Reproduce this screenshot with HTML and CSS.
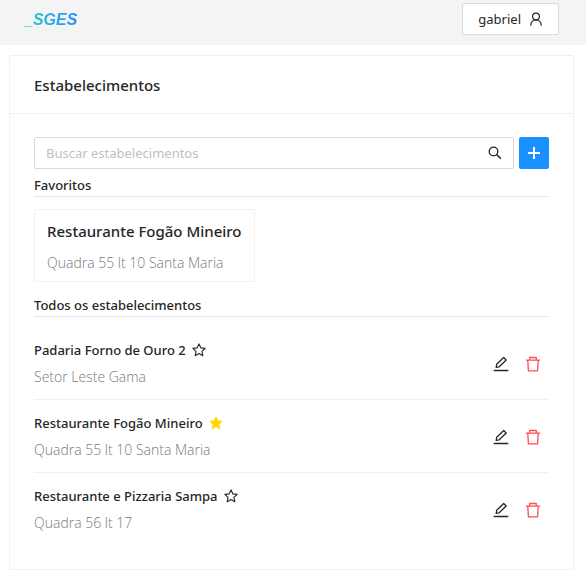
FILE: index.html
```html
<!DOCTYPE html>
<html lang="pt-BR">
<head>
<meta charset="utf-8">
<meta name="viewport" content="width=device-width, initial-scale=1">
<title>SGES - Estabelecimentos</title>
<link rel="stylesheet" href="styles.css">
</head>
<body>
<svg class="sprite" aria-hidden="true">
  <symbol id="user" viewBox="0 0 16 16"><g fill="none" stroke="currentColor" stroke-width="1.4" stroke-linecap="round"><circle cx="8" cy="5.2" r="3.9"/><path d="M2 15c.2-3.400 2.700-5.900 6-5.900s5.800 2.500 6 5.900"/></g></symbol>
  <symbol id="search" viewBox="0 0 16 16"><g fill="none" stroke="currentColor" stroke-width="1.500"><circle cx="6.300" cy="6.200" r="4.900"/><path d="M9.800 9.700l4.800 4.700" stroke-width="1.700"/></g></symbol>
  <symbol id="plus" viewBox="0 0 16 16"><path d="M8 2v12M2 8h12" fill="none" stroke="currentColor" stroke-width="2"/></symbol>
  <symbol id="star" viewBox="0 0 16 16"><path d="M8 1l2.100 4.500 4.900.650-3.600 3.400.9 4.900L8 12.100l-4.300 2.350.9-4.900L1 6.150l4.900-.650z" fill="none" stroke="currentColor" stroke-width="1.300" stroke-linejoin="round"/></symbol>
  <symbol id="star-filled" viewBox="0 0 16 16"><path d="M8 1l2.100 4.500 4.900.650-3.600 3.400.9 4.900L8 12.100l-4.300 2.350.9-4.900L1 6.150l4.900-.650z" fill="currentColor" stroke="currentColor" stroke-linejoin="round"/></symbol>
  <symbol id="edit" viewBox="0 0 16 16"><g fill="none" stroke="currentColor" stroke-width="1.300" stroke-linejoin="round"><path d="M3.200 11.300l.5-3 7-6.800 2.500 2.500-7 6.800z"/><path d="M.700 14.500h14.600" stroke-width="1.500"/></g></symbol>
  <symbol id="trash" viewBox="0 0 16 16"><g fill="none" stroke="currentColor" stroke-width="1.300" stroke-linejoin="round"><path d="M1 4.200h14M4.700 4V1.500h6.600V4M2.800 4.500l.6 10.300h9.200l.6-10.300"/></g></symbol>
</svg>
<header class="topbar">
  <a class="logo" href="#">_SGES</a>
  <button class="user-button" type="button">gabriel <svg class="icon-small" aria-hidden="true"><use href="#user"/></svg></button>
</header>
<main class="content">
  <section class="panel">
    <h1 class="panel-title">Estabelecimentos</h1>
    <div class="panel-body">
      <form class="search">
        <div class="search-field">
          <input class="search-input" type="text" placeholder="Buscar estabelecimentos" aria-label="Buscar estabelecimentos">
          <button class="search-button" type="button" aria-label="Buscar"><svg class="icon-small" aria-hidden="true"><use href="#search"/></svg></button>
        </div>
        <button class="add-button" type="button" aria-label="Adicionar"><svg class="icon" aria-hidden="true"><use href="#plus"/></svg></button>
      </form>
      <h2 class="section-title">Favoritos</h2>
      <div class="favorites">
        <article class="favorite">
          <h3 class="favorite-name">Restaurante Fogão Mineiro</h3>
          <p class="address">Quadra 55 lt 10 Santa Maria</p>
        </article>
      </div>
      <h2 class="section-title">Todos os estabelecimentos</h2>
      <ul class="list">
        <li class="item">
          <div class="item-text">
            <h3 class="item-name">Padaria Forno de Ouro 2 <button class="star" type="button" aria-label="Favoritar"><svg class="icon-small" aria-hidden="true"><use href="#star"/></svg></button></h3>
            <p class="address">Setor Leste Gama</p>
          </div>
          <div class="actions">
            <button class="action" type="button" aria-label="Editar"><svg class="icon" aria-hidden="true"><use href="#edit"/></svg></button>
            <button class="action danger" type="button" aria-label="Excluir"><svg class="icon" aria-hidden="true"><use href="#trash"/></svg></button>
          </div>
        </li>
        <li class="item">
          <div class="item-text">
            <h3 class="item-name">Restaurante Fogão Mineiro <button class="star starred" type="button" aria-label="Desfavoritar"><svg class="icon-small" aria-hidden="true"><use href="#star-filled"/></svg></button></h3>
            <p class="address">Quadra 55 lt 10 Santa Maria</p>
          </div>
          <div class="actions">
            <button class="action" type="button" aria-label="Editar"><svg class="icon" aria-hidden="true"><use href="#edit"/></svg></button>
            <button class="action danger" type="button" aria-label="Excluir"><svg class="icon" aria-hidden="true"><use href="#trash"/></svg></button>
          </div>
        </li>
        <li class="item">
          <div class="item-text">
            <h3 class="item-name">Restaurante e Pizzaria Sampa <button class="star" type="button" aria-label="Favoritar"><svg class="icon-small" aria-hidden="true"><use href="#star"/></svg></button></h3>
            <p class="address">Quadra 56 lt 17</p>
          </div>
          <div class="actions">
            <button class="action" type="button" aria-label="Editar"><svg class="icon" aria-hidden="true"><use href="#edit"/></svg></button>
            <button class="action danger" type="button" aria-label="Excluir"><svg class="icon" aria-hidden="true"><use href="#trash"/></svg></button>
          </div>
        </li>
      </ul>
    </div>
  </section>
</main>
</body>
</html>
```
FILE: styles.css
```css
* {
  box-sizing: border-box;
}

body,
h1,
h2,
h3,
p,
ul {
  margin: 0;
  padding: 0;
}

body {
  background: #fff;
  color: #262626;
  font: 13px/22px "Noto Sans", "Open Sans", sans-serif;
}

button,
input {
  margin: 0;
  padding: 0;
  border: 0;
  background: none;
  color: inherit;
  font: inherit;
}

button {
  cursor: pointer;
}

.sprite {
  display: none;
}

.icon {
  display: block;
  width: 16px;
  height: 16px;
}

.icon-small {
  display: block;
  width: 14px;
  height: 14px;
}

.topbar {
  display: flex;
  align-items: center;
  justify-content: space-between;
  padding: 3px 27px 10px 24px;
  background: #f4f4f4;
}

.logo {
  padding-top: 2px;
  background: linear-gradient(90deg, #2bcbcb, #1e90ff);
  background-clip: text;
  -webkit-background-clip: text;
  color: transparent;
  font: italic bold 16px/22px "Liberation Sans", sans-serif;
  text-decoration: none;
}

.user-button {
  display: flex;
  align-items: center;
  gap: 8px;
  height: 32px;
  padding: 0 15px;
  border: 1px solid #d9d9d9;
  border-radius: 2px;
  background: #fff;
}

.content {
  padding: 10px 12px 16px 9px;
}

.panel {
  border: 1px solid #f0f0f0;
  border-radius: 2px;
}

.panel-title {
  padding: 18px 24px 17px;
  border-bottom: 1px solid #f0f0f0;
  font-size: 15px;
  font-weight: 500;
}

.panel-body {
  padding: 23px 24px 24px;
}

.search {
  display: flex;
  gap: 5px;
}

.search-field {
  display: flex;
  flex: 1;
  height: 32px;
  border: 1px solid #d9d9d9;
  border-radius: 2px;
}

.search-input {
  flex: 1;
  min-width: 0;
  padding: 0 11px;
  outline: 0;
}

.search-input::placeholder {
  color: #bfbfbf;
  opacity: 1;
}

.search-button {
  padding: 0 11px;
}

.add-button {
  display: grid;
  place-items: center;
  width: 30px;
  height: 32px;
  border-radius: 2px;
  background: #1890ff;
  color: #fff;
}

.section-title {
  padding-top: 5px;
  border-bottom: 1px solid #e1e6ed;
  font-size: 13px;
  font-weight: 500;
}

.favorites {
  display: flex;
  padding: 12px 0 7px;
  gap: 12px;
}

.favorite {
  padding: 10px 12px 7px;
  border: 1px solid #f0f0f0;
  border-radius: 2px;
}

.favorite-name {
  margin-bottom: 10px;
  font-size: 15px;
  font-weight: 500;
}

.address {
  color: #7a7a7a;
  font-family: "Open Sans", "Noto Sans", sans-serif;
  font-size: 14px;
  font-weight: 300;
}

.list {
  padding-top: 10px;
  list-style: none;
}

.item {
  display: flex;
  align-items: center;
  justify-content: space-between;
  padding: 12px 0 11px;
  border-bottom: 1px solid #f0f0f0;
}

.item:last-child {
  border-bottom: 0;
}

.item-name {
  display: flex;
  align-items: center;
  gap: 6px;
  margin-bottom: 5px;
  font-size: 13px;
  font-weight: 500;
}

.starred {
  color: #ffd700;
}

.actions {
  display: flex;
  gap: 16px;
  padding: 1px 8px 0;
}

.danger {
  color: #ff4d4f;
}
```
